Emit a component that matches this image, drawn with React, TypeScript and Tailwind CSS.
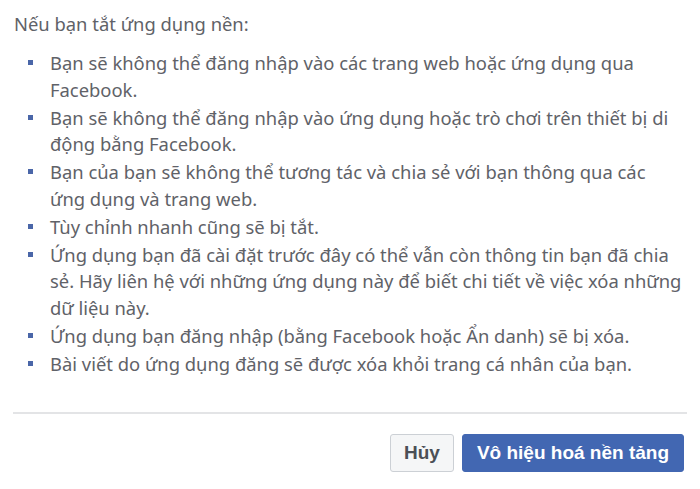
import React from "react";

const items: string[][] = [
  ["Bạn sẽ không thể đăng nhập vào các trang web hoặc ứng dụng qua", "Facebook."],
  ["Bạn sẽ không thể đăng nhập vào ứng dụng hoặc trò chơi trên thiết bị di", "động bằng Facebook."],
  ["Bạn của bạn sẽ không thể tương tác và chia sẻ với bạn thông qua các", "ứng dụng và trang web."],
  ["Tùy chỉnh nhanh cũng sẽ bị tắt."],
  [
    "Ứng dụng bạn đã cài đặt trước đây có thể vẫn còn thông tin bạn đã chia",
    "sẻ. Hãy liên hệ với những ứng dụng này để biết chi tiết về việc xóa những",
    "dữ liệu này.",
  ],
  ["Ứng dụng bạn đăng nhập (bằng Facebook hoặc Ẩn danh) sẽ bị xóa."],
  ["Bài viết do ứng dụng đăng sẽ được xóa khỏi trang cá nhân của bạn."],
];

export default function App() {
  return (
    <div
      className="w-[700px] h-[489px] bg-white overflow-hidden"
      style={{ fontFamily: '"Noto Sans", "Liberation Sans", Arial, sans-serif' }}
    >
      <div className="px-[14px] pt-[11px]">
        <p className="text-[18.4px] leading-[26px] text-[#5f6268]">Nếu bạn tắt ứng dụng nền:</p>
        <ul className="mt-[13px] flex flex-col gap-[1.5px] pl-[14px]">
          {items.map((lines, i) => (
            <li key={i} className="flex items-start text-[18.4px] leading-[26.5px] text-[#5f6268]">
              <span className="mt-[10px] w-[5px] h-[5px] bg-[#4a66a8] shrink-0" />
              <span className="ml-[17px] whitespace-nowrap">
                {lines.map((l, j) => (
                  <React.Fragment key={j}>
                    {j > 0 && <br />}
                    {l}
                  </React.Fragment>
                ))}
              </span>
            </li>
          ))}
        </ul>
      </div>
      <div className="mx-[13px] mt-[35px] h-[2px] bg-[#e3e4e6]" />
      <div
        className="flex justify-end gap-[8px] pr-[16px] pt-[20px]"
        style={{ fontFamily: '"Liberation Sans", Arial, sans-serif' }}
      >
        <button className="h-[38px] px-[13px] rounded-[3px] border border-[#ccd0d5] bg-[#f5f6f7] text-[#4b4f56] text-[19px] font-bold">
          Hủy
        </button>
        <button className="h-[38px] px-[14px] rounded-[3px] border border-[#4267b2] bg-[#4267b2] text-white text-[19px] font-bold">
          Vô hiệu hoá nền tảng
        </button>
      </div>
    </div>
  );
}
